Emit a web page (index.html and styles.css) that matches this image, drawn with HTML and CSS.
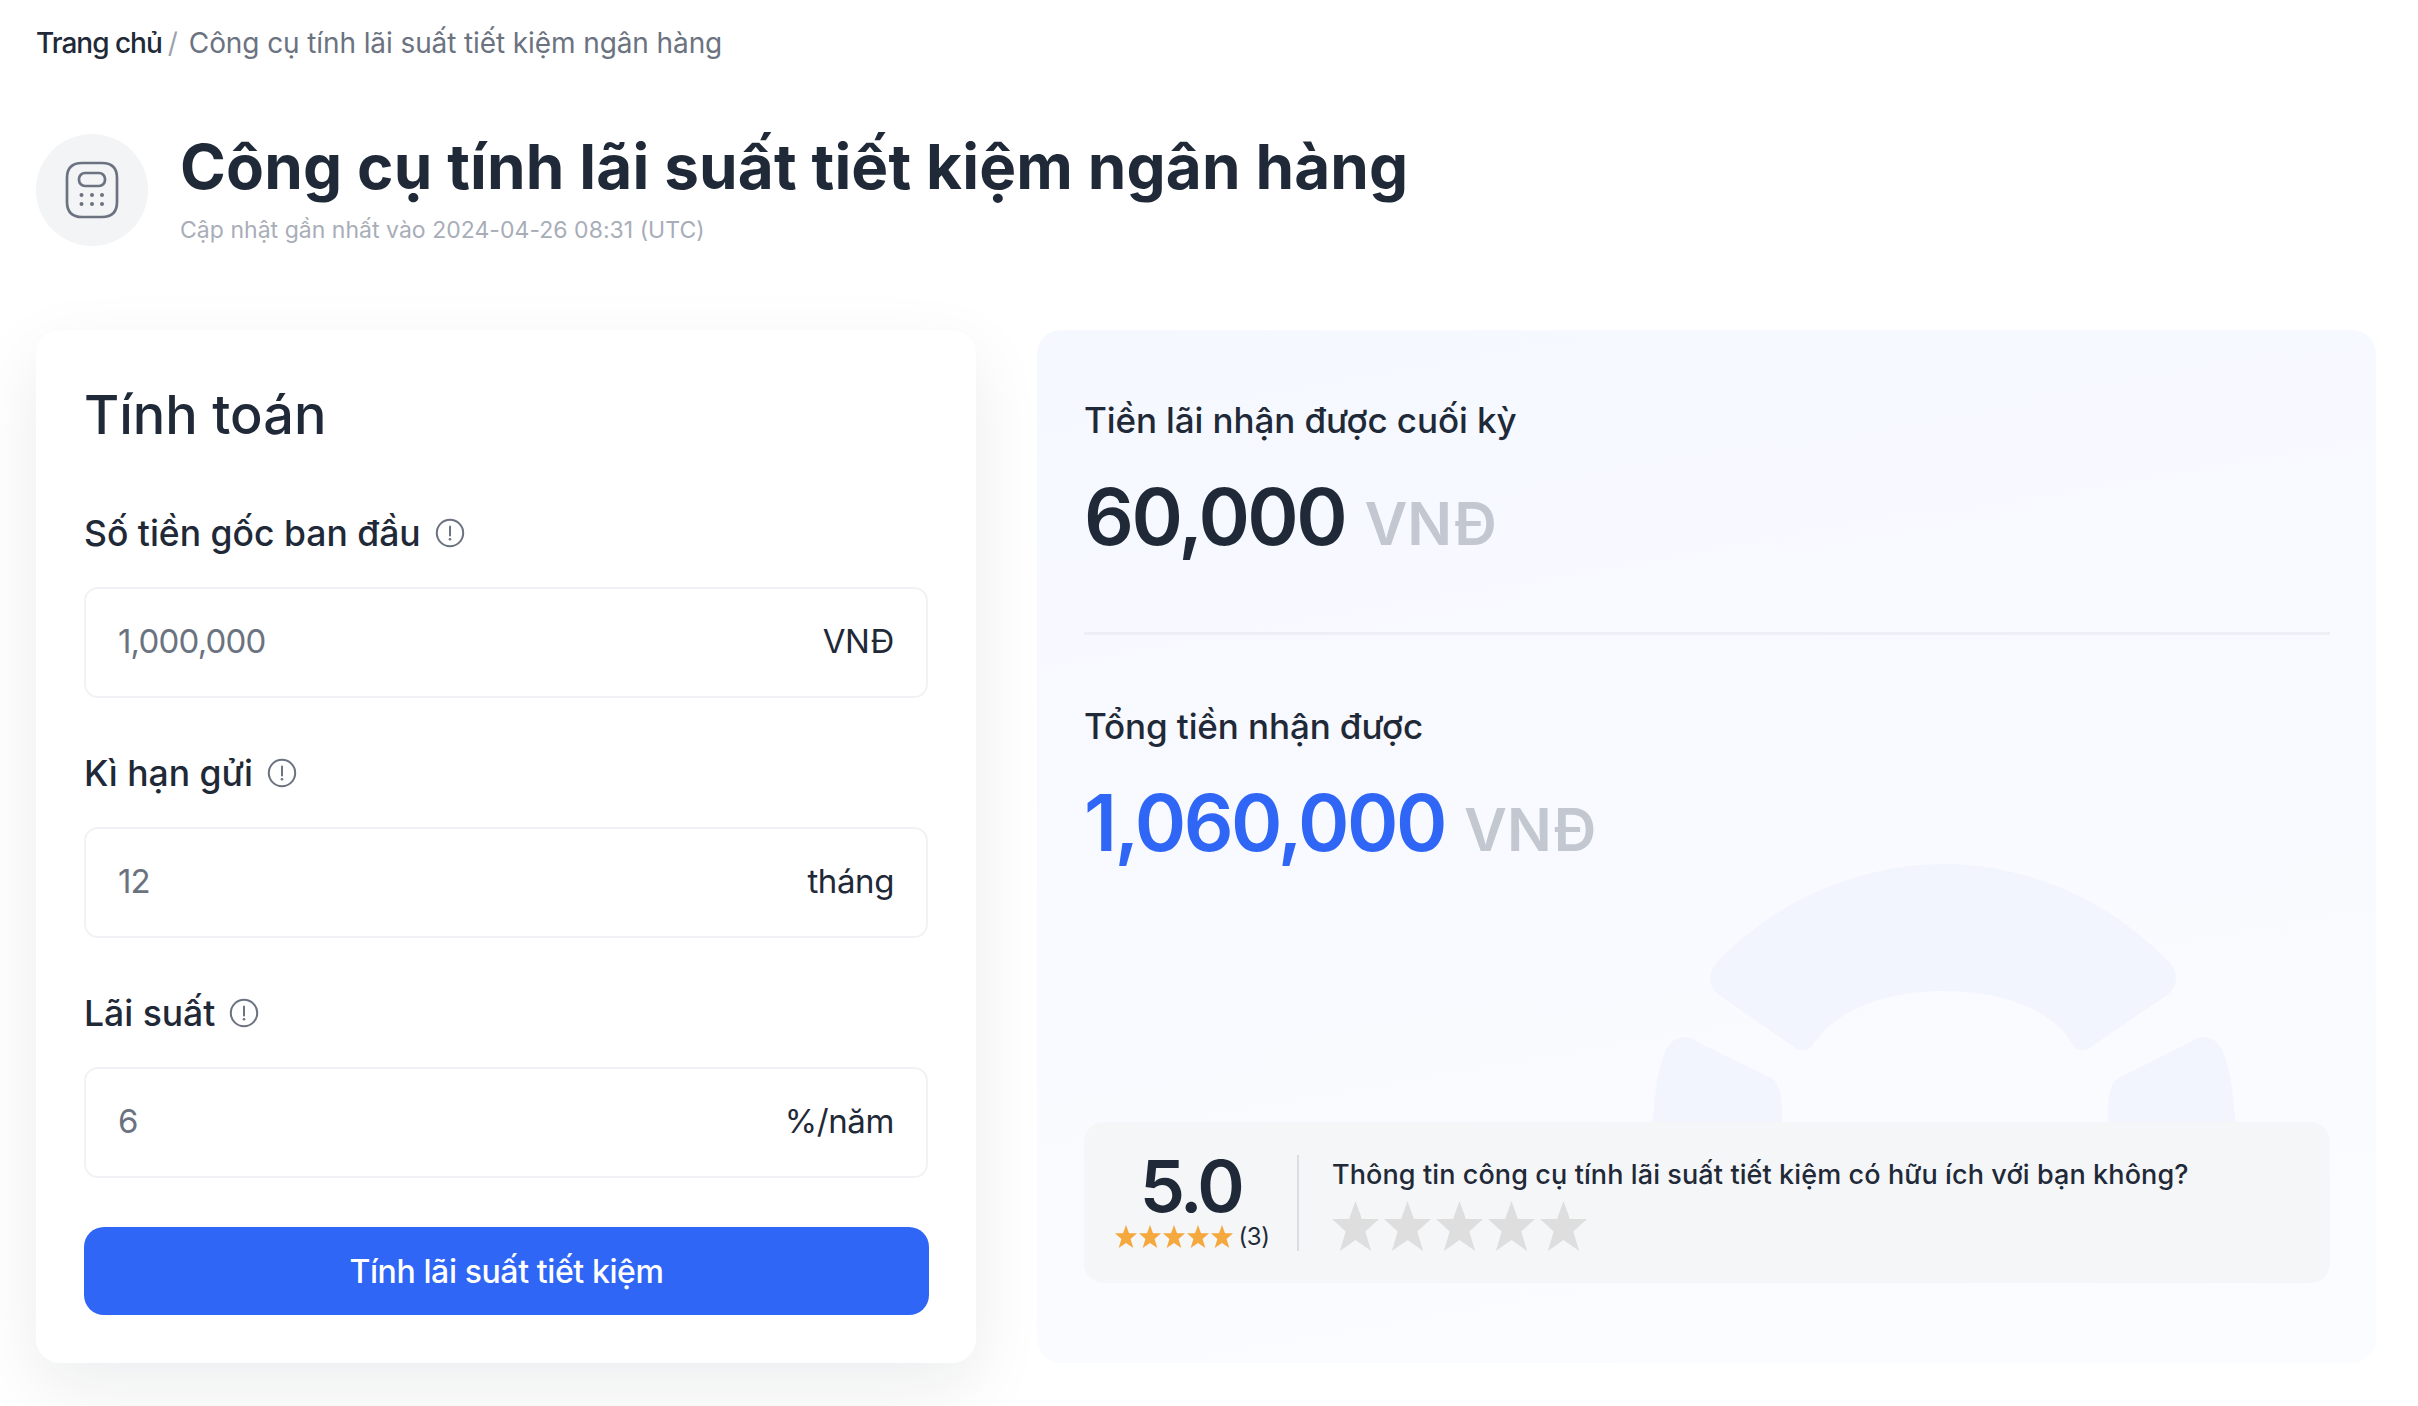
FILE: index.html
```html
<!DOCTYPE html>
<html lang="vi">
<head>
<meta charset="utf-8">
<title>Công cụ tính lãi suất tiết kiệm ngân hàng</title>
<link rel="stylesheet" href="styles.css">
</head>
<body>
<svg class="sprite" width="0" height="0" aria-hidden="true">
  <symbol id="star" viewBox="0 0 48 50" preserveAspectRatio="none"><polygon points="24,0 30.5,18 48,18 34,30.5 40,50 24,39 8,50 14,30.5 0,18 17.5,18"/></symbol>
  <symbol id="info" viewBox="0 0 30 30"><circle cx="15" cy="15" r="13.2" fill="none" stroke="#6b7280" stroke-width="2"/><path d="M15 8.5v9" fill="none" stroke="#6b7280" stroke-width="2" stroke-linecap="round"/><circle cx="15" cy="21.3" r="1.3" fill="#6b7280"/></symbol>
</svg>
<div class="page">
  <nav class="crumbs"><a class="crumb-home">Trang chủ</a><span class="crumb-sep">/</span><span class="crumb-current">Công cụ tính lãi suất tiết kiệm ngân hàng</span></nav>
  <header class="head">
    <div class="head-icon">
      <svg width="54" height="58" viewBox="0 0 54 58" fill="none">
        <path d="M17 2h20c10 0 15 5 15 15v24c0 10-5 15-15 15H17C7 56 2 51 2 41V17C2 7 7 2 17 2Z" stroke="#6b7280" stroke-width="2.7"/>
        <rect x="14" y="12" width="26" height="13" rx="6" stroke="#6b7280" stroke-width="2.7"/>
        <g fill="#6b7280"><circle cx="16.5" cy="34" r="2"/><circle cx="27" cy="34" r="2"/><circle cx="37" cy="34" r="2"/><circle cx="16.5" cy="43" r="2"/><circle cx="27" cy="43" r="2"/><circle cx="37" cy="43" r="2"/></g>
      </svg>
    </div>
    <div class="head-text">
      <h1 class="title">Công cụ tính lãi suất tiết kiệm ngân hàng</h1>
      <p class="updated">Cập nhật gần nhất vào 2024-04-26 08:31 (UTC)</p>
    </div>
  </header>
  <main class="grid">
    <section class="card">
      <h2 class="card-title">Tính toán</h2>
      <div class="field">
        <div class="label">Số tiền gốc ban đầu <svg class="info"><use href="#info"/></svg></div>
        <div class="input"><span class="value">1,000,000</span><span class="unit">VNĐ</span></div>
      </div>
      <div class="field">
        <div class="label">Kì hạn gửi <svg class="info"><use href="#info"/></svg></div>
        <div class="input"><span class="value">12</span><span class="unit">tháng</span></div>
      </div>
      <div class="field">
        <div class="label">Lãi suất <svg class="info"><use href="#info"/></svg></div>
        <div class="input"><span class="value">6</span><span class="unit">%/năm</span></div>
      </div>
      <button class="submit" type="button">Tính lãi suất tiết kiệm</button>
    </section>
    <section class="panel">
      <svg class="watermark" width="610" height="300" viewBox="0 0 610 300" aria-hidden="true">
        <path d="M80 100C138 40 222 4 305 4C388 4 470 40 528 100C540 112 540 125 528 135L452 187C444 193 437 191 433 183C412 150 365 131 305 131C245 131 198 150 175 183C170 191 163 193 155 187L80 135C68 125 68 112 80 100Z"/>
        <path d="M12 300C14 230 20 200 30 185C38 175 50 175 58 182L132 218C142 224 145 235 142 300Z"/>
        <path d="M598 300C596 230 590 200 580 185C572 175 560 175 552 182L480 218C470 224 467 235 470 300Z"/>
      </svg>
      <div class="result">
        <div class="result-label">Tiền lãi nhận được cuối kỳ</div>
        <div class="result-value">60,000 <span class="currency">VNĐ</span></div>
      </div>
      <hr class="rule">
      <div class="result">
        <div class="result-label">Tổng tiền nhận được</div>
        <div class="result-value accent">1,060,000 <span class="currency">VNĐ</span></div>
      </div>
      <div class="rating">
        <div class="score">
          <div class="score-num">5.0</div>
          <div class="score-stars">
            <svg class="mini"><use href="#star"/></svg><svg class="mini"><use href="#star"/></svg><svg class="mini"><use href="#star"/></svg><svg class="mini"><use href="#star"/></svg><svg class="mini"><use href="#star"/></svg>
            <span class="score-count">(3)</span>
          </div>
        </div>
        <div class="vote">
          <div class="vote-q">Thông tin công cụ tính lãi suất tiết kiệm có hữu ích với bạn không?</div>
          <div class="vote-stars">
            <svg class="big"><use href="#star"/></svg><svg class="big"><use href="#star"/></svg><svg class="big"><use href="#star"/></svg><svg class="big"><use href="#star"/></svg><svg class="big"><use href="#star"/></svg>
          </div>
        </div>
      </div>
    </section>
  </main>
</div>
</body>
</html>
```

FILE: styles.css
```css
* { box-sizing: border-box; }
html, body { margin: 0; background: #fff; }
body { font-family: Inter, "Noto Sans", sans-serif; color: #1f2937; }
.sprite { position: absolute; }
.page { padding: 26px 42px 0 36px; height: 1406px; overflow: hidden; }

.crumbs { display: flex; align-items: center; height: 34px; font-size: 28px; letter-spacing: -0.1px; white-space: nowrap; }
.crumb-home { color: #1f2937; font-weight: 500; letter-spacing: -1px; }
.crumb-sep { color: #9ca3af; margin: 0 11px 0 6px; }
.crumb-current { color: #6b7280; }

.head { display: flex; align-items: center; gap: 32px; margin-top: 74px; height: 112px; }
.head-icon { width: 112px; height: 112px; border-radius: 50%; background: #f3f4f6; display: flex; align-items: center; justify-content: center; flex: none; }
.head-text { padding-bottom: 6px; }
.title { margin: 0; font-size: 62px; line-height: 72px; font-weight: 700; color: #1f2937; letter-spacing: 0.14px; white-space: nowrap; }
.updated { margin: 13px 0 0; font-size: 23px; line-height: 28px; letter-spacing: 0.03px; color: #a8adb8; white-space: nowrap; }

.grid { display: grid; grid-template-columns: 940px 1339px; column-gap: 61px; margin-top: 84px; height: 1033px; }

.card { background: #fff; border-radius: 24px; padding: 51px 47px 0 48px; box-shadow: 0 24px 70px rgba(17, 24, 39, 0.08); }
.card-title { margin: 0; font-size: 54px; line-height: 68px; font-weight: 500; color: #1f2937; }
.label { display: flex; align-items: center; gap: 14px; height: 44px; font-size: 35.5px; font-weight: 500; color: #1f2937; white-space: nowrap; }
.card-title + .field .label { margin-top: 62px; }
.input { display: flex; justify-content: space-between; align-items: center; height: 111px; margin: 32px 1px 0 0; padding: 0 32px 3px; border: 2px solid #f1f2f5; border-radius: 14px; font-size: 33px; }
.field + .field .label { margin-top: 53px; }
.info { width: 30px; height: 30px; flex: none; }
.value { color: #6b7280; letter-spacing: -0.8px; }
.unit { color: #1f2937; letter-spacing: -0.4px; }
.submit { display: block; width: 100%; height: 88px; margin-top: 49px; border: 0; border-radius: 20px; background: #2f66f6; color: #fff; font: 500 32px Inter, "Noto Sans", sans-serif; letter-spacing: -0.4px; }

.panel { position: relative; overflow: hidden; display: flex; flex-direction: column; padding: 67px 46px 80px 47px; border-radius: 24px; background: linear-gradient(170deg, #f5f8ff 0%, #f8faff 50%, #fbfcff 100%); }
.watermark { position: absolute; left: 602px; top: 530px; fill: #f2f5fe; }
.result { position: relative; }
.result-label { font-size: 35px; line-height: 46px; font-weight: 500; color: #1f2937; letter-spacing: -0.1px; white-space: nowrap; }
.result-value { margin-top: 24px; font-size: 78px; line-height: 100px; font-weight: 600; color: #1f2937; letter-spacing: -2.5px; white-space: nowrap; }
.accent { color: #2f66f6; }
.currency { font-size: 59px; color: #c2c7d0; letter-spacing: 0; margin-left: 2px; }
.rule { position: relative; margin: 58px 0 68px; border: 0; height: 3px; background: #eceff5; width: 100%; }

.rating { position: relative; display: flex; align-items: center; height: 161px; margin-top: auto; border-radius: 20px; background: #f4f6f8; }
.score { width: 213px; flex: none; display: flex; flex-direction: column; align-items: center; padding-bottom: 6px; }
.score-num { font-size: 72px; line-height: 74px; font-weight: 600; color: #1f2937; letter-spacing: -3.5px; }
.score-stars { display: flex; align-items: center; height: 28px; gap: 2px; margin-left: 3px; }
.mini { width: 22px; height: 23px; fill: #f4a83d; }
.score-count { margin-left: 4px; font-size: 24px; letter-spacing: -0.5px; color: #1f2937; }
.vote { padding-left: 33px; height: 96px; border-left: 2px solid #dcdee2; }
.vote-q { font-size: 27px; line-height: 36px; font-weight: 500; letter-spacing: 0.1px; color: #1f2937; margin-top: 2px; white-space: nowrap; }
.vote-stars { display: flex; margin-top: 8px; gap: 5px; }
.big { width: 47px; height: 50px; fill: #dedede; }
```
